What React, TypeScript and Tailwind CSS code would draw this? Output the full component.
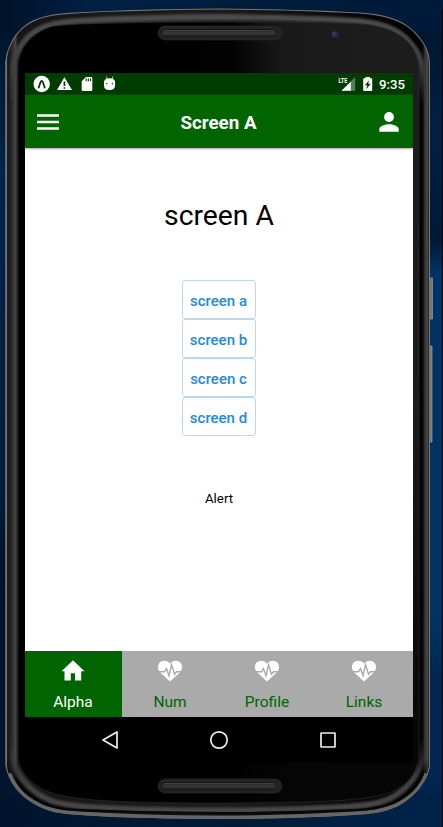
import React from "react";

const BODY =
  "M5.5 62 C6.5 48 13 36 23 27 C36 16 52 14 75 12.5 C115 10 165 9 218 8.5 C271 9 320 10 360 12.5 C384 14 401 19 413 30 C424 41 429.5 50 430 64 L430 766 C427 783 413 799 396 807 C382 813 370 814 354 815 C304 818 255 819 218 819 C180 819 122 818 80 815 C62 814 49 812 38 806 C20 797 8 782 5.5 765 Z";
const GLASS =
  "M18 64 C20 46 33 33 50 27 C62 23.5 140 22 218 22 C296 22 340 23 360 24 C388 26 416 36 419 67 L419 757 C415 781 400 791 378 796 C350 802 290 803 218 803 C146 803 90 802 60 795 C36 790 20 775 18 757 Z";

function Device() {
  return (
    <svg className="absolute inset-0" width="443" height="827" viewBox="0 0 443 827" aria-hidden="true">
      <defs>
        <linearGradient id="metal" gradientUnits="userSpaceOnUse" x1="5" y1="0" x2="431" y2="0">
          <stop offset="0" stopColor="#888" />
          <stop offset=".004" stopColor="#707070" />
          <stop offset=".006" stopColor="#161616" />
          <stop offset=".014" stopColor="#252525" />
          <stop offset=".025" stopColor="#454545" />
          <stop offset=".03" stopColor="#151515" />
          <stop offset=".5" stopColor="#1c1c1c" />
          <stop offset=".97" stopColor="#000" />
          <stop offset=".981" stopColor="#080808" />
          <stop offset=".985" stopColor="#303030" />
          <stop offset=".992" stopColor="#484848" />
          <stop offset=".994" stopColor="#2b2b2b" />
          <stop offset="1" stopColor="#777" />
        </linearGradient>
        <linearGradient id="bottomBand" x1="0" y1="0" x2="0" y2="1">
          <stop offset=".925" stopColor="#040404" stopOpacity="0" />
          <stop offset=".955" stopColor="#040404" />
        </linearGradient>
        <linearGradient id="cornerGray" gradientUnits="userSpaceOnUse" x1="0" y1="8" x2="0" y2="819">
          <stop offset="0" stopColor="#4c4c4c" />
          <stop offset=".06" stopColor="#404040" />
          <stop offset=".11" stopColor="#404040" stopOpacity="0" />
          <stop offset=".91" stopColor="#404040" stopOpacity="0" />
          <stop offset=".96" stopColor="#404040" />
          <stop offset="1" stopColor="#484848" />
        </linearGradient>
        <linearGradient id="shine" x1="0" y1="0" x2="1" y2="0">
          <stop offset="0" stopColor="#000" />
          <stop offset=".53" stopColor="#020202" />
          <stop offset=".66" stopColor="#191919" />
          <stop offset="1" stopColor="#1d1d1d" />
        </linearGradient>
        <linearGradient id="fade" x1="0" y1="0" x2="0" y2="1">
          <stop offset=".45" stopColor="#000" stopOpacity="0" />
          <stop offset=".93" stopColor="#000" stopOpacity=".8" />
        </linearGradient>
        <linearGradient id="slot" x1="0" y1="0" x2="0" y2="1">
          <stop offset="0" stopColor="#202020" />
          <stop offset=".5" stopColor="#393939" />
          <stop offset="1" stopColor="#202020" />
        </linearGradient>
        <clipPath id="outline"><path d={BODY} /></clipPath>
        <filter id="soft" x="-5%" y="-5%" width="110%" height="110%"><feGaussianBlur stdDeviation="1.2" /></filter>
      </defs>
      <path d="M429 278h3.5v41H429zM429 346h3v96h-3z" fill="#777" stroke="#999" strokeWidth=".7" />
      <path d={BODY} fill="url(#metal)" />
      <g clipPath="url(#outline)">
        <path d={BODY} fill="none" stroke="url(#bottomBand)" strokeWidth="20" />
        <g transform="translate(218 414) scale(.963 .979) translate(-218 -414)">
          <path d={BODY} fill="none" stroke="url(#cornerGray)" strokeWidth="6" filter="url(#soft)" />
        </g>
        <path d={BODY} fill="none" stroke="#777" strokeWidth="2" />
        <path d="M8 774C14 790 25 800 38 806C49 812 62 814 80 815Q218 823 354 815C370 814 382 813 396 807C411 800 423 788 428 774" fill="none" stroke="#666" strokeWidth="7" />
        <path d="M60 808Q72 810 80 810Q218 816 354 810Q368 810 378 807" fill="none" stroke="#080808" strokeWidth="2.2" />
      </g>
      <path d={GLASS} fill="url(#shine)" />
      <path d={GLASS} fill="url(#fade)" stroke="#303030" strokeWidth=".6" />
      {[26, 779].map((y) => (
        <g key={y}>
          <rect x="158" y={y} width="124" height="14" rx="7" fill="#242424" stroke="#292929" strokeWidth=".6" />
          <rect x="161.5" y={y + 3.5} width="115" height="7" rx="3.5" fill="url(#slot)" stroke="#141414" />
          <path d={`M164 ${y + 4.5}H274`} stroke="#404040" />
        </g>
      ))}
      <circle cx="335" cy="34.5" r="5.5" fill="#1b1b1f" />
      <circle cx="335" cy="34.5" r="4" fill="#20253a" />
      <circle cx="334.5" cy="34.2" r="2.4" fill="#2b3352" />
      <circle cx="333.5" cy="33.5" r=".7" fill="#596386" />
    </svg>
  );
}

function StatusBar() {
  return (
    <div className="flex h-[22px] items-center bg-[#003b00] pl-2 pr-[7px] text-white">
      <svg width="86" height="18" viewBox="33 75 86 18" fill="white">
        <circle cx="41.7" cy="84" r="8.2" />
        <path d="M38.7 87.5 40.4 82.5Q41.7 79.5 43 82.5L44.7 87.5" fill="none" stroke="#003b00" strokeWidth="1.8" strokeLinecap="round" />
        <path fillRule="evenodd" d="M64.4 77.2 72 90H57ZM63.6 81.5V86H65.3V81.5ZM63.6 87.3V88.8H65.3V87.3Z" />
        <path fillRule="evenodd" d="M86 77H91Q92.3 77 92.3 78.3V89.7Q92.3 91 91 91H83Q81.7 91 81.7 89.7V81.2ZM85.7 78.5V81.2H86.8V78.5ZM87.8 78.5V81.2H88.9V78.5ZM89.9 78.5V81.2H91V78.5Z" />
        <path d="M106.5 76.5 107.3 80M112.8 76.5 112 80" stroke="white" strokeWidth=".7" />
        <path fillRule="evenodd" d="M104 82Q104.5 78.3 109.5 78.3Q114.7 78.3 115.1 82V85.5Q115 90 109.5 90Q104 90 104 85.5ZM106.2 83V84.2H107.4V83ZM111.8 83V84.2H113V83Z" />
      </svg>
      <div className="flex-1" />
      <svg width="36" height="18" viewBox="338 75 36 18" fill="white">
        <path d="M355.2 77V90.8H341.5Z" opacity=".35" />
        <path d="M350.8 81.8V90.8H341.5Z" />
        <rect x="338" y="76" width="10.3" height="8" fill="#003b00" />
        <text x="338.4" y="83.2" fontSize="8" fontWeight="700" textLength="9" lengthAdjust="spacingAndGlyphs" fontFamily="Roboto, sans-serif">LTE</text>
        <path fillRule="evenodd" d="M365.5 77H370V78.3H371.5Q372.2 78.3 372.2 79V90.3Q372.2 91 371.5 91H364Q363.2 91 363.2 90.3V79Q363.2 78.3 364 78.3H365.5ZM369 80.2 364.8 85.3H367.2L366.3 89.2 370.7 83.8H368.2Z" />
      </svg>
      <span className="ml-[5px] mr-px mt-px text-[13.2px] font-medium leading-none">9:35</span>
    </div>
  );
}

function TabIcon({ home }: { home: boolean }) {
  return home ? (
    <svg className="mr-px" width="24" height="24" viewBox="0 0 24 24" fill="white">
      <path d="M12 1.3 23.5 12.2H20.2V21.5H14V14.3H9.8V21.5H3.5V12.2H.5Z" />
    </svg>
  ) : (
    <svg className="mr-px" width="26" height="24" viewBox="0 0 26 24" fill="white">
      <path d="M13 22.5 3 13.2C-.5 9.8.4 2 7 1.7Q11 1.5 13 4.5Q15 1.5 19 1.7C25.6 2 26.5 9.8 23 13.2Z" />
      <path d="M0 12.7H7.6L9.5 9.6 12 16.7 14.5 5.7 17.5 15.2 19.5 12.7H26" fill="none" stroke="#aaaaaa" strokeWidth="1.4" />
    </svg>
  );
}

export default function App() {
  return (
    <main className="relative h-[827px] w-[443px] overflow-hidden bg-[linear-gradient(180deg,#001329_0%,#002044_15%,#001a38_29%,#003364_33%,#003466_74%,#00264d_82%,#002752_94%,#001b3c_100%)] font-['Roboto',sans-serif]">
      <div className="absolute inset-y-0 left-0 w-8 bg-[linear-gradient(180deg,#001226,#002346_20%,#001f40_55%,#001127_70%,#00162f)]" />
      <div className="absolute inset-x-0 top-0 h-8 bg-[linear-gradient(90deg,#001227,#002044_20%,#001c3c_60%,#001a39)]" />
      <div className="absolute inset-x-0 bottom-0 h-8 bg-[linear-gradient(90deg,#00142c,#001b37_50%,#00234a)]" />
      <div className="absolute bottom-0 right-0 top-[9px] w-px bg-[#000711]" />
      <Device />
      <div className="relative ml-[25px] w-[388px] pt-[73px]">
        <section className="flex h-[690px] flex-col overflow-hidden bg-white">
          <StatusBar />
          <header className="relative flex h-[53px] shrink-0 items-center justify-between bg-[#006400] px-3 text-white shadow-[0_1px_2px_#aaa]">
            <svg width="22" height="16" viewBox="0 0 22 16"><path d="M0 1.5H22M0 8H22M0 14.5H22" stroke="white" strokeWidth="2.3" /></svg>
            <h1 className="mr-[1px] mt-[3px] text-[18.8px] font-bold leading-6">Screen A</h1>
            <svg className="mr-[2px]" width="20" height="20" viewBox="0 0 20 20" fill="white"><circle cx="10" cy="5" r="4.9" /><path d="M.3 19.7V17.2C.3 14.1 6.5 12.3 10 12.3S19.7 14.1 19.7 17.2V19.7Z" /></svg>
          </header>
          <div className="flex h-[503px] flex-col items-center">
            <h2 className="mt-[48px] text-[28.3px] font-normal leading-[39px] text-black">screen A</h2>
            <div className="mt-[45px] flex w-[74px] flex-col">
              {["a", "b", "c", "d"].map((name) => (
                <button key={name} className="flex h-[39px] items-center justify-center whitespace-nowrap rounded-[3px] border border-[#b7d9f3] pr-px pt-[3px] text-[15px] font-medium leading-5 text-[#2689dc]">
                  screen {name}
                </button>
              ))}
            </div>
            <p className="mt-[53px] text-[13.3px] leading-5 text-black">Alert</p>
          </div>
          <nav className="grid h-[66px] grid-cols-[97px_97px_97px_97px] bg-[#aaaaaa]">
            {["Alpha", "Num", "Profile", "Links"].map((label, i) => (
              <div key={label} className={i === 0 ? "flex flex-col items-center bg-[#006400] pt-2 text-white" : "flex flex-col items-center pt-2 text-[#006400]"}>
                <TabIcon home={i === 0} />
                <span className="mr-px mt-[9px] text-[15.5px] leading-5">{label}</span>
              </div>
            ))}
          </nav>
          <div className="flex h-[46px] items-center justify-around bg-black px-[31px]">
            <svg width="20" height="20" viewBox="0 0 20 20" fill="none" stroke="#eee" strokeWidth="1.7"><path d="M17 2V18L3 10Z" strokeLinejoin="round" /></svg>
            <svg width="20" height="20" viewBox="0 0 20 20" fill="none" stroke="#eee" strokeWidth="1.7"><circle cx="10" cy="10" r="8.2" /></svg>
            <svg width="20" height="20" viewBox="0 0 20 20" fill="none" stroke="#eee" strokeWidth="1.7"><rect x="3" y="3" width="14" height="14" rx=".3" /></svg>
          </div>
        </section>
      </div>
    </main>
  );
}
